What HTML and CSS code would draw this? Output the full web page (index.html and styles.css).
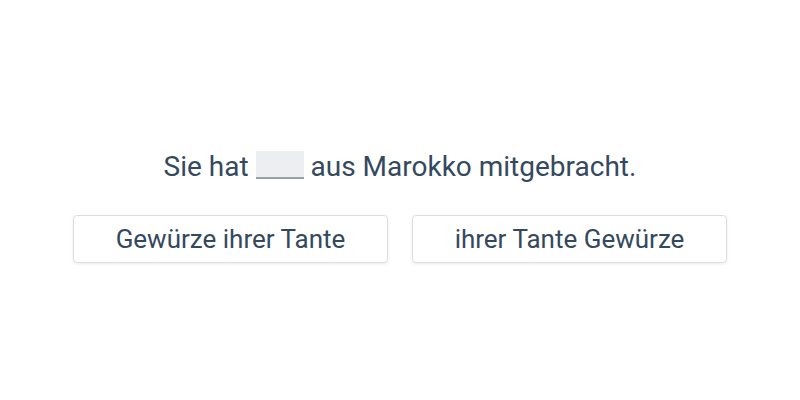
FILE: index.html
```html
<!DOCTYPE html>
<html>
<head>
<meta charset="utf-8">
<title>Lückentext</title>
<link rel="stylesheet" href="styles.css">
</head>
<body>
	<div class="quiz">
		<p class="sentence">Sie hat <span class="blank"></span> aus Marokko mitgebracht.</p>
		<div class="choices">
			<button class="choice">Gewürze ihrer Tante</button>
			<button class="choice">ihrer Tante Gewürze</button>
		</div>
	</div>
</body>
</html>
```
FILE: styles.css
```css
body
{
	margin: 0;
	height: 400px;
	background: #ffffff;
	font-family: Roboto, "Liberation Sans", sans-serif;
	color: #34495e;
	display: flex;
	align-items: center;
	justify-content: center;
}
.quiz
{
	display: flex;
	flex-direction: column;
	align-items: center;
	margin-top: 10px;
}
.sentence
{
	margin: 0;
	padding-top: 2px;
	font-size: 28px;
	line-height: 36px;
}
.blank
{
	display: inline-block;
	width: 48px;
	height: 26px;
	background: #eceef1;
	border-bottom: 2px solid #95a5a6;
	vertical-align: -3px;
}
.choices
{
	display: flex;
	gap: 24px;
	margin-top: 30px;
}
.choice
{
	width: 315px;
	height: 48px;
	background: #ffffff;
	border: 1px solid #dcdfe3;
	border-radius: 4px;
	box-shadow: 0 1px 3px rgba(0, 0, 0, 0.08);
	font-family: Roboto, "Liberation Sans", sans-serif;
	font-size: 26px;
	color: #34495e;
	padding: 0;
}
```
